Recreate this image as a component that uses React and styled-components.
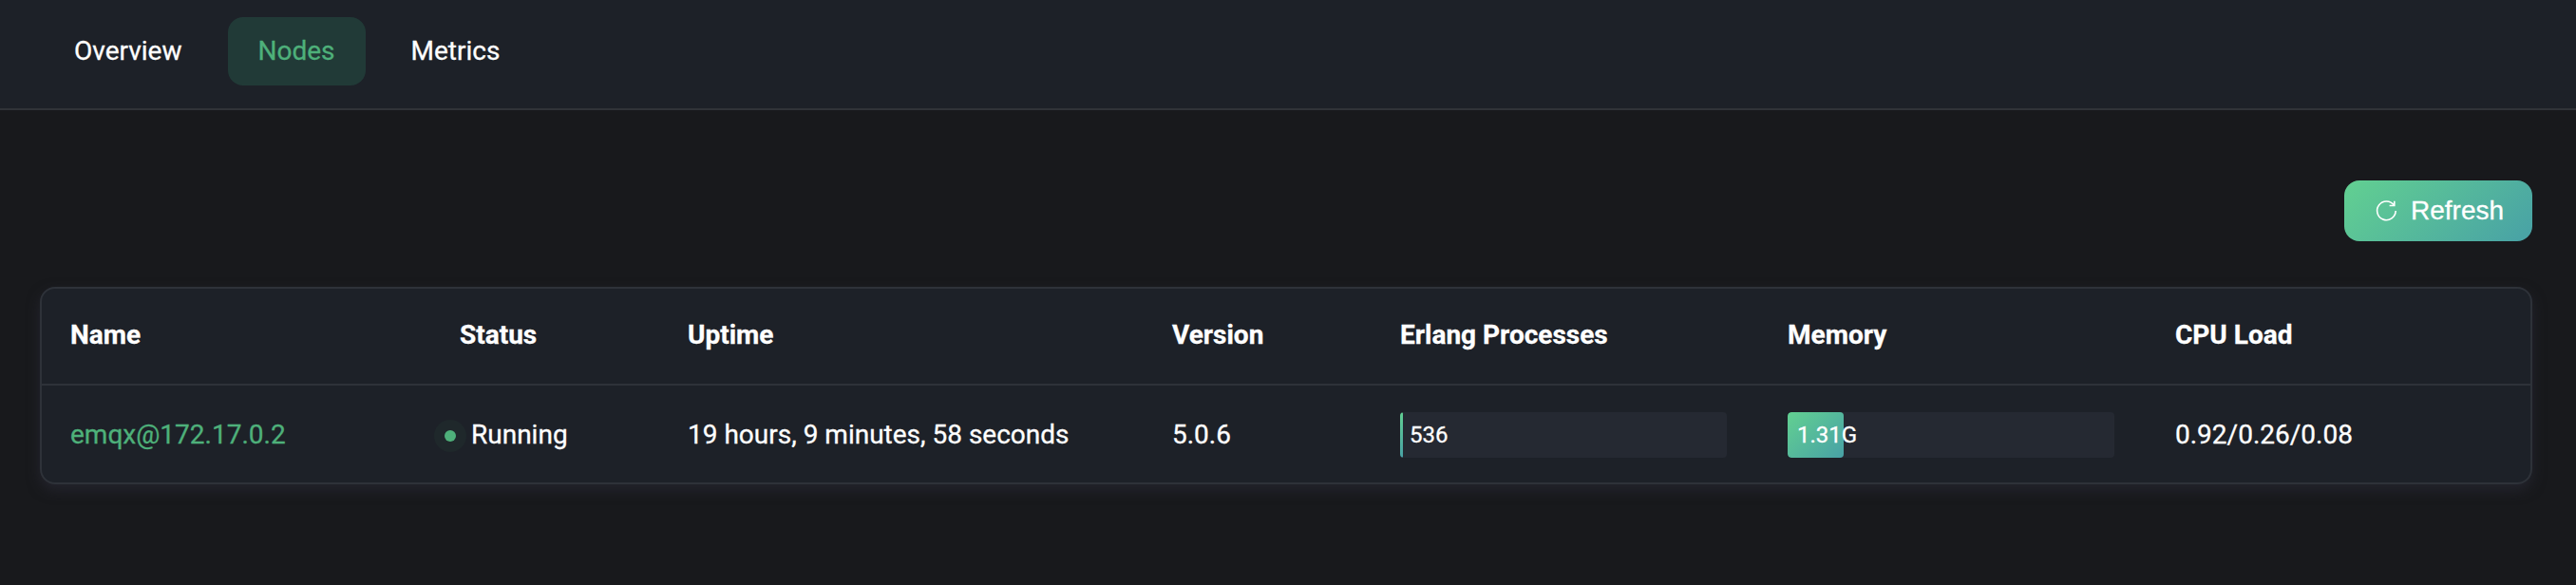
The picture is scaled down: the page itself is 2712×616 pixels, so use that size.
import React from "react";
import styled, { createGlobalStyle } from "styled-components";

const GlobalStyle = createGlobalStyle`
  * { box-sizing: border-box; }
  body {
    margin: 0;
    background: #18191c;
    color: #fff;
    font-family: Roboto, "Liberation Sans", sans-serif;
    font-size: 28px;
    line-height: 32px;
    -webkit-font-smoothing: antialiased;
    -webkit-text-stroke: 0.3px currentColor;
  }
`;

const Page = styled.div`
  min-height: 616px;
  background: #18191c;
`;

const NavBar = styled.nav`
  display: flex;
  align-items: flex-start;
  gap: 16px;
  height: 116px;
  padding: 18px 46px 0;
  background: #1d2128;
  border-bottom: 2px solid #303338;
`;

const NavItem = styled.a`
  display: flex;
  align-items: center;
  height: 72px;
  padding: 0 32px;
  border-radius: 16px;
  color: ${(p) => (p.$active ? "#4eb07a" : "#fff")};
  background: ${(p) => (p.$active ? "#213a37" : "transparent")};
`;

const Content = styled.main`
  padding: 74px 46px 0 42px;
`;

const Toolbar = styled.div`
  display: flex;
  justify-content: flex-end;
  margin-bottom: 48px;
`;

const RefreshButton = styled.button`
  display: flex;
  align-items: center;
  width: 198px;
  height: 64px;
  padding: 0 0 0 32px;
  gap: 12px;
  border: 0;
  border-radius: 16px;
  color: #fff;
  background: linear-gradient(136deg, #62d091 0%, #48a1a6 100%);
  font: 28px/32px "Liberation Sans", Arial, sans-serif;
  -webkit-text-stroke: 0.3px currentColor;
`;

const Table = styled.section`
  height: 208px;
  border: 2px solid #2e3239;
  border-radius: 16px;
  background: #1d2128;
  box-shadow: 0 6px 14px 0 rgba(44, 44, 56, 0.6);
`;

const Row = styled.div`
  display: grid;
  grid-template-columns: 408px 240px 510px 240px 408px 408px 406px;
  align-items: center;
  height: 102px;
  padding-top: ${(p) => (p.$header ? "0" : "2px")};
  padding-bottom: ${(p) => (p.$header ? "2px" : "0")};
  border-bottom: ${(p) => (p.$header ? "2px solid #2e3239" : "0")};
  font-weight: ${(p) => (p.$header ? 700 : 400)};
`;

const Cell = styled.div`
  padding: 0 32px;
  white-space: nowrap;

  &:first-child { padding-left: 30px; }
`;

const NodeLink = styled.a`
  color: #4eb07a;
`;

const Status = styled.div`
  display: flex;
  align-items: center;
  gap: 5px;
  margin-left: -27px;
`;

const StatusDot = styled.span`
  display: flex;
  align-items: center;
  justify-content: center;
  width: 34px;
  height: 34px;
  margin-top: 2px;
  border-radius: 50%;
  background: #1f282b;

  &::after {
    content: "";
    width: 12px;
    height: 12px;
    border-radius: 50%;
    background: #4eb07a;
  }
`;

const Meter = styled.div`
  display: grid;
  align-items: center;
  width: 344px;
  height: 48px;
  border-radius: 4px;
  background: #252932;
  overflow: hidden;

  & > * { grid-area: 1 / 1; }
`;

const MeterFill = styled.div`
  height: 48px;
  border-radius: 4px;
  background: linear-gradient(136deg, #62d091 0%, #48a1a6 100%);
`;

const MeterLabel = styled.span`
  padding-left: 10px;
  font-size: 24px;
`;

const columns = ["Name", "Status", "Uptime", "Version", "Erlang Processes", "Memory", "CPU Load"];

const nodes = [
  {
    name: "emqx@172.17.0.2",
    status: "Running",
    uptime: "19 hours, 9 minutes, 58 seconds",
    version: "5.0.6",
    processes: { label: "536", width: 3 },
    memory: { label: "1.31G", width: 59 },
    load: "0.92/0.26/0.08",
  },
];

function RefreshIcon() {
  return (
    <svg width="26" height="26" viewBox="0 0 26 26" fill="none" stroke="#fff" strokeWidth="1.6">
      <path d="M22.2 13.1A9.8 9.8 0 1 1 20.4 7.2" />
      <path d="M20.8 2.7V7.5H15.6" />
    </svg>
  );
}

function UsageMeter({ label, width }) {
  return (
    <Meter>
      <MeterFill style={{ width }} />
      <MeterLabel>{label}</MeterLabel>
    </Meter>
  );
}

export default function App() {
  return (
    <Page>
      <GlobalStyle />
      <NavBar>
        <NavItem>Overview</NavItem>
        <NavItem $active>Nodes</NavItem>
        <NavItem>Metrics</NavItem>
      </NavBar>
      <Content>
        <Toolbar>
          <RefreshButton>
            <RefreshIcon />
            Refresh
          </RefreshButton>
        </Toolbar>
        <Table>
          <Row $header>
            {columns.map((c) => (
              <Cell key={c}>{c}</Cell>
            ))}
          </Row>
          {nodes.map((n) => (
            <Row key={n.name}>
              <Cell><NodeLink>{n.name}</NodeLink></Cell>
              <Cell><Status><StatusDot />{n.status}</Status></Cell>
              <Cell>{n.uptime}</Cell>
              <Cell>{n.version}</Cell>
              <Cell><UsageMeter {...n.processes} /></Cell>
              <Cell><UsageMeter {...n.memory} /></Cell>
              <Cell>{n.load}</Cell>
            </Row>
          ))}
        </Table>
      </Content>
    </Page>
  );
}
